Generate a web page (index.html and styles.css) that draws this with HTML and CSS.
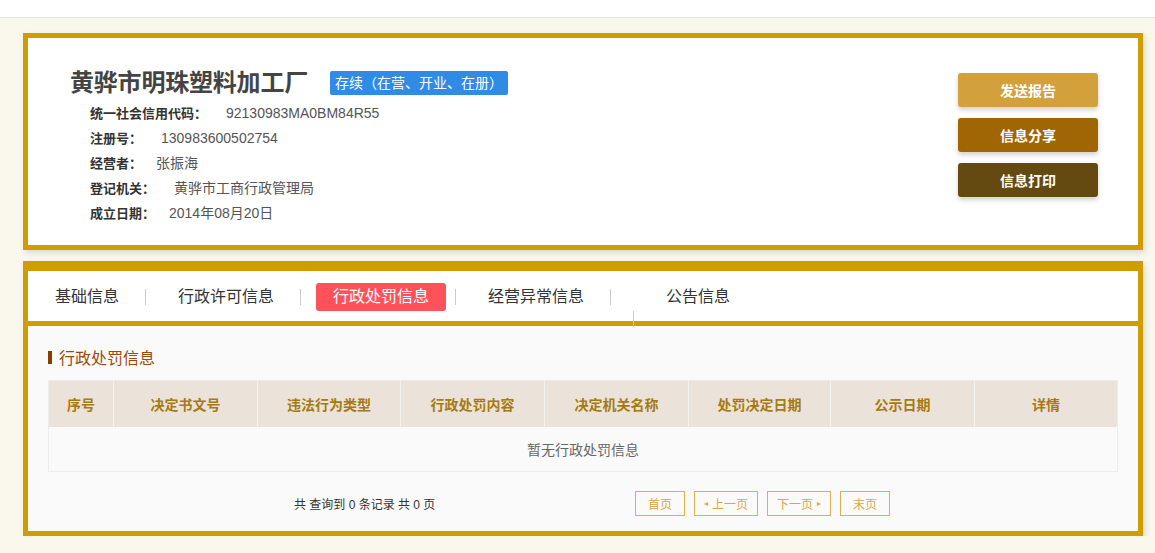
FILE: index.html
```html
<!DOCTYPE html>
<html lang="zh-CN">
<head>
    <meta charset="UTF-8">
    <meta name="viewport" content="width=device-width, initial-scale=1.0">
    <title>黄骅市明珠塑料加工厂</title>
    <link rel="stylesheet" href="styles.css">
</head>
<body>
    <div class="topbar"></div>

    <div class="wrap">
        <!-- Company summary -->
        <section class="card summary">
            <div class="info">
                <div class="title-row">
                    <h1>黄骅市明珠塑料加工厂</h1>
                    <span class="badge">存续（在营、开业、在册）</span>
                </div>
                <div class="row"><span class="label">统一社会信用代码：</span><span class="value">92130983MA0BM84R55</span></div>
                <div class="row"><span class="label">注册号：</span><span class="value">130983600502754</span></div>
                <div class="row"><span class="label">经营者：</span><span class="value narrow">张振海</span></div>
                <div class="row"><span class="label">登记机关：</span><span class="value">黄骅市工商行政管理局</span></div>
                <div class="row"><span class="label">成立日期：</span><span class="value narrow">2014年08月20日</span></div>
            </div>
            <div class="actions">
                <button class="btn btn-report">发送报告</button>
                <button class="btn btn-share">信息分享</button>
                <button class="btn btn-print">信息打印</button>
            </div>
        </section>

        <!-- Detail tabs -->
        <section class="card detail">
            <nav class="tabs">
                <a class="tab">基础信息</a>
                <span class="sep"></span>
                <a class="tab">行政许可信息</a>
                <span class="sep"></span>
                <a class="tab active">行政处罚信息</a>
                <span class="sep"></span>
                <a class="tab">经营异常信息</a>
                <span class="sep"></span>
                <span class="sep stray"></span>
                <a class="tab">公告信息</a>
            </nav>

            <div class="panel">
                <h2 class="panel-title">行政处罚信息</h2>
                <table class="grid">
                    <colgroup>
                        <col style="width: 65px">
                        <col style="width: 144px">
                        <col style="width: 143px">
                        <col style="width: 144px">
                        <col style="width: 144px">
                        <col style="width: 142px">
                        <col style="width: 144px">
                        <col style="width: 143px">
                    </colgroup>
                    <thead>
                        <tr>
                            <th>序号</th>
                            <th>决定书文号</th>
                            <th>违法行为类型</th>
                            <th>行政处罚内容</th>
                            <th>决定机关名称</th>
                            <th>处罚决定日期</th>
                            <th>公示日期</th>
                            <th>详情</th>
                        </tr>
                    </thead>
                    <tbody>
                        <tr>
                            <td colspan="8" class="empty">暂无行政处罚信息</td>
                        </tr>
                    </tbody>
                </table>

                <div class="pager">
                    <span class="pager-info">共 查询到 0 条记录 共 0 页</span>
                    <a class="page-btn">首页</a>
                    <a class="page-btn nav"><span class="arrow prev">&#9666;</span>上一页</a>
                    <a class="page-btn nav">下一页<span class="arrow next">&#9656;</span></a>
                    <a class="page-btn">末页</a>
                </div>
            </div>
        </section>
    </div>
</body>
</html>
```

FILE: styles.css
```css
body {
    margin: 0;
    padding: 0;
    background-color: #faf7ed;
    font-family: "Liberation Sans", "Noto Sans CJK SC", sans-serif;
    color: #333;
}

.topbar {
    height: 17px;
    background-color: #fff;
    border-bottom: 1px solid #e2e2e2;
}

.wrap {
    width: 1120px;
    margin: 15px 0 0 23px;
}

.card {
    background-color: #fff;
    border: 5px solid #d19c00;
    box-shadow: 2px 3px 6px rgba(0, 0, 0, 0.12);
}

/* summary card */
.summary {
    display: flex;
    justify-content: space-between;
    padding: 30px 40px 20px 42px;
    height: 157px;
}

.title-row {
    display: flex;
    align-items: center;
    height: 30px;
    margin-bottom: 3px;
}

.title-row h1 {
    margin: 0;
    font-size: 24px;
    font-weight: bold;
    color: #444;
    line-height: 30px;
    letter-spacing: -0.2px;
}

.badge {
    margin-left: 22px;
    padding: 0 5px;
    height: 24px;
    line-height: 24px;
    font-size: 14px;
    color: #fff;
    background-color: #2f8be6;
    border-radius: 2px;
}

.row {
    padding-left: 20px;
    height: 25px;
    line-height: 25px;
    font-size: 13px;
}

.label {
    font-weight: bold;
    color: #333;
}

.value {
    margin-left: 19px;
    font-size: 14px;
    color: #555;
}

.value.narrow {
    margin-left: 14px;
}

.actions {
    display: flex;
    flex-direction: column;
    gap: 11px;
    padding-top: 5px;
}

.btn {
    width: 140px;
    height: 34px;
    border: none;
    border-radius: 3px;
    font-family: "Liberation Sans", "Noto Sans CJK SC", sans-serif;
    font-size: 14px;
    font-weight: bold;
    color: #fff;
    box-shadow: 0 3px 5px rgba(0, 0, 0, 0.18);
    cursor: pointer;
}

.btn-report {
    background-color: #d2a13b;
}

.btn-share {
    background-color: #a06604;
}

.btn-print {
    background-color: #644a10;
}

/* detail card */
.detail {
    margin-top: 11px;
    border-top-width: 10px;
}

.tabs {
    display: flex;
    align-items: center;
    height: 48px;
    padding: 2px 0 0 10px;
    border-bottom: 5px solid #d19c00;
}

.tab {
    padding: 0 17px;
    height: 28px;
    line-height: 28px;
    font-size: 16px;
    color: #333;
    border-radius: 3px;
    cursor: pointer;
}

.tab.active {
    background-color: #fd525a;
    color: #fff;
}

.sep {
    width: 1px;
    height: 16px;
    margin: 0 15px 0 9px;
    background-color: #ccc;
}

.sep.stray {
    position: relative;
    align-self: flex-end;
    margin: 0 15px -6px 7px;
}

.panel {
    background-color: #fafafa;
    padding: 20px 20px 15px 20px;
}

.panel-title {
    display: flex;
    align-items: center;
    margin: 0 0 12px 0;
    height: 22px;
    font-size: 16px;
    font-weight: normal;
    color: #9a4b0a;
}

.panel-title::before {
    content: "";
    width: 4px;
    height: 13px;
    margin-right: 7px;
    background-color: #8a3c00;
}

.grid {
    width: 1069px;
    table-layout: fixed;
    border-collapse: collapse;
    border: 1px solid #ececec;
}

.grid th {
    height: 46px;
    padding: 0;
    font-size: 14px;
    font-weight: bold;
    color: #a57a12;
    background-color: #ebe3d9;
    border-left: 1px solid #f5f1ec;
}

.grid th:first-child {
    border-left: none;
}

.grid td.empty {
    height: 44px;
    padding: 0;
    text-align: center;
    font-size: 14px;
    color: #666;
    background-color: #fafafa;
}

.pager {
    display: flex;
    align-items: center;
    gap: 9px;
    margin-top: 19px;
    padding-left: 246px;
}

.pager-info {
    width: 332px;
    font-size: 12px;
    color: #333;
}

.page-btn {
    display: flex;
    align-items: center;
    justify-content: center;
    height: 23px;
    padding: 0 12px;
    font-size: 12px;
    color: #d9a744;
    border: 1px solid #dfae4f;
    cursor: pointer;
}

.page-btn.nav {
    padding: 0 9px;
}

.arrow {
    font-size: 8px;
}

.arrow.prev {
    margin-right: 4px;
}

.arrow.next {
    margin-left: 4px;
}
```
